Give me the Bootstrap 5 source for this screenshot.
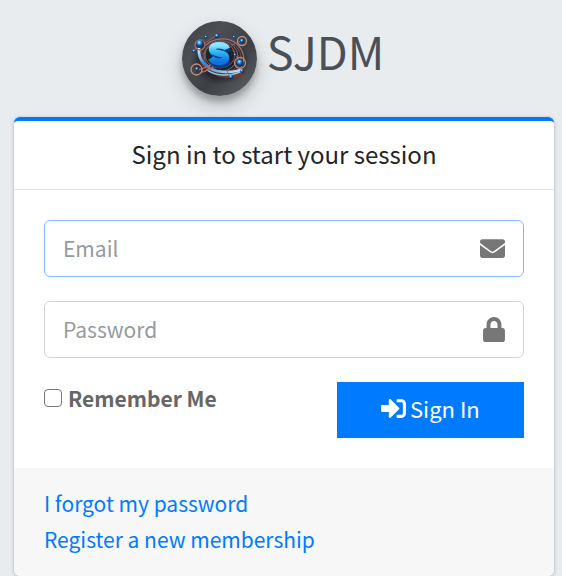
<!DOCTYPE html>
<html lang="en">
<head>
<meta charset="utf-8">
<meta name="viewport" content="width=device-width, initial-scale=1">
<title>SJDM | Sign in</title>
<link href="https://cdn.jsdelivr.net/npm/bootstrap@5.3.0/dist/css/bootstrap.min.css" rel="stylesheet">
<style>
body{background:#e9ecef;color:#212529;font-family:"Noto Sans CJK SC","Noto Sans",sans-serif;font-size:21px;line-height:36px}
.login-box{width:100%;max-width:568px;padding:21px 8px 0 14px}
.brand{color:#495057;font-size:45px;line-height:60px;gap:10px;margin-bottom:21px;padding-right:2px}
.brand:hover{color:#495057}
.brand svg{width:75px;height:75px;border-radius:50%;box-shadow:0 10px 20px rgba(0,0,0,.19),0 6px 6px rgba(0,0,0,.23)}
.login-card{border:0;border-top:4px solid #007bff;border-radius:6px;box-shadow:0 0 2px rgba(0,0,0,.13),0 1px 4px rgba(0,0,0,.2)}
.login-card .card-header{background:#fff;border-bottom:1px solid #dfdfdf;padding:15px 30px 17px}
.login-title{font-size:24px;line-height:36px}
.login-card .card-body{padding:30px}
.field{height:57px;border:1px solid #ced4da;border-radius:6px;margin-bottom:24px;padding-right:18px}
.field:focus-within{border-color:#80bdff}
.field .form-control{border:0;background:none;box-shadow:none;font-size:21px;line-height:36px;padding:0 18px 1px;color:#495057}
.field .form-control::placeholder{color:#939ba2}
.field svg{fill:#777}
.actions{--bs-gutter-x:22px}
.remember{gap:6px;color:#666;font-weight:700;line-height:32px}
.remember .form-check-input{width:18px;height:18px;margin:0;border:1px solid #767676;border-radius:4px}
.btn-sign{background:#007bff;border-color:#007bff;border-radius:0;color:#fff;font-size:22px;line-height:36px;padding:7px 12px 11px;gap:4px}
.btn-sign:hover{background:#0069d9;color:#fff}
.login-card .card-footer{background:#f7f7f7;border:0;border-radius:0 0 6px 6px;padding:17px 30px 19px}
.card-footer a{color:#007bff}
</style>
</head>
<body>
<main class="login-box mx-auto">
<a class="brand d-flex justify-content-center align-items-start text-decoration-none" href="#">
<svg viewBox="0 0 75 75" aria-hidden="true">
<defs>
<linearGradient id="bg" x1="0" y1="0" x2="1" y2="1"><stop stop-color="#3b3e43"/><stop offset=".3" stop-color="#4c4f54"/><stop offset=".6" stop-color="#3c3f44"/><stop offset="1" stop-color="#606367"/></linearGradient>
<linearGradient id="sg" x1="0" y1="0" x2="0" y2="1"><stop stop-color="#8ee7ff"/><stop offset=".45" stop-color="#28b4f4"/><stop offset="1" stop-color="#1271df"/></linearGradient>
<linearGradient id="rg" x1="0" y1="0" x2="1" y2="1"><stop stop-color="#c9ecff"/><stop offset=".4" stop-color="#2684dc"/><stop offset=".7" stop-color="#70b7e7"/><stop offset="1" stop-color="#d3e5f3"/></linearGradient>
<radialGradient id="orb" cx=".4" cy=".3"><stop stop-color="#d7f6ff"/><stop offset=".4" stop-color="#319cee"/><stop offset="1" stop-color="#0c3569"/></radialGradient>
<radialGradient id="sh"><stop stop-color="#17191f"/><stop offset=".65" stop-color="#1b1d23" stop-opacity=".75"/><stop offset="1" stop-color="#202227" stop-opacity="0"/></radialGradient>
</defs>
<rect width="75" height="75" fill="url(#bg)"/>
<ellipse cx="38" cy="40" rx="30" ry="24" fill="url(#sh)"/>
<g fill="none" stroke-linecap="round">
<path d="M24 24c9-8 23-8 31-1 8 8 9 18 2 26" stroke="#9a7470" stroke-width="1.300"/>
<ellipse cx="38" cy="34" rx="15" ry="13" stroke="#8b5b58"/>
<ellipse cx="39" cy="35" rx="17" ry="15" stroke="#6b7482"/>
<ellipse cx="40" cy="36" rx="19" ry="16" stroke="#804b46"/>
<path d="M19 31c-2 11 7 20 19 23 9 2 18 1 24-3" stroke="#6e3732" stroke-width="4"/>
<path d="M17 28c-1 11 7 19 18 22 9 2 17 1 24-1" stroke="url(#rg)" stroke-width="2.800"/>
<path d="M25 49c9 6 23 7 35 1" stroke="#8acbf0" stroke-width="1.500"/>
<path d="M14 49c8 0 12-5 17-6M20 51c6-1 8-4 13-6" stroke="#b06457" stroke-width="1.400"/>
<path d="M20 23c8-3 11-7 15-9M50 24l9-4M51 29l6 11M16 25l-4 5M54 44l6 4M45 50l3 6" stroke="#9a625c"/>
<circle cx="18" cy="24" r="5" stroke="#a76d65" stroke-width="1.300"/>
<circle cx="60" cy="20" r="4.500" stroke="#b98c85" stroke-width="1.300"/>
<circle cx="14.500" cy="48.500" r="5.500" stroke="#c78b82" stroke-width="1.300"/>
<circle cx="58" cy="42" r="5.500" stroke="#b98c88" stroke-width="1.300"/>
</g>
<g fill="url(#orb)"><circle cx="18" cy="23" r="4"/><circle cx="35" cy="15" r="2.200"/><circle cx="60" cy="20" r="2.200"/><circle cx="58" cy="42" r="3.500"/><circle cx="15" cy="48" r="2"/><circle cx="49" cy="56" r="2.300"/><circle cx="12" cy="30" r="1.700"/><circle cx="24" cy="16" r="1.500"/><circle cx="52" cy="16" r="1.300"/><circle cx="60" cy="50" r="2"/><circle cx="53" cy="34" r="1.500"/></g>
<path d="M45 29c-2-5-15-5-15 0 0 6 15 3 14 9-1 5-12 5-15 0" fill="none" stroke="#083e87" stroke-width="6.500" transform="translate(1 2)"/>
<path d="M45 28c-2-5-15-5-15 0 0 6 15 3 14 9-1 5-12 5-15 0" fill="none" stroke="url(#sg)" stroke-width="6.500"/>
</svg>
<span>SJDM</span></a>
<div class="card login-card">
<div class="card-header text-center"><h1 class="login-title fw-normal mb-0">Sign in to start your session</h1></div>
<div class="card-body">
<form>
<div class="field d-flex align-items-center">
<input class="form-control" type="email" placeholder="Email" aria-label="Email" autofocus>
<svg class="flex-shrink-0" width="25" height="25" viewBox="0 0 512 512" aria-hidden="true"><path d="M502.300 190.800c3.900-3.100 9.700-.2 9.700 4.700V400c0 26.500-21.500 48-48 48H48c-26.500 0-48-21.500-48-48V195.600c0-5 5.700-7.800 9.700-4.700 22.400 17.400 52.100 39.500 154.100 113.600 21.100 15.400 56.700 47.800 92.200 47.600 35.700.3 72-32.800 92.300-47.600 102-74.100 131.600-96.300 154-113.700zM256 320c23.200.4 56.600-29.200 73.400-41.400 132.700-96.300 142.800-104.700 173.400-128.700 5.800-4.500 9.200-11.500 9.200-18.900v-19c0-26.500-21.500-48-48-48H48c-26.500 0-48 21.500-48 48v19c0 7.400 3.400 14.300 9.200 18.900 30.600 23.900 40.700 32.400 173.400 128.700 16.800 12.200 50.200 41.800 73.400 41.400z"/></svg>
</div>
<div class="field d-flex align-items-center">
<input class="form-control" type="password" placeholder="Password" aria-label="Password">
<svg class="flex-shrink-0" width="22" height="25" viewBox="0 0 448 512" aria-hidden="true"><path d="M400 224h-24v-72C376 68.200 307.800 0 224 0S72 68.200 72 152v72H48c-26.500 0-48 21.500-48 48v192c0 26.500 21.500 48 48 48h352c26.500 0 48-21.500 48-48V272c0-26.500-21.500-48-48-48zm-104 0H152v-72c0-39.700 32.300-72 72-72s72 32.300 72 72v72z"/></svg>
</div>
<div class="row actions">
<div class="col-7"><label class="remember d-flex align-items-center"><input class="form-check-input" type="checkbox">Remember Me</label></div>
<div class="col-5"><button class="btn btn-sign w-100 d-flex justify-content-center align-items-center" type="submit">
<svg width="25" height="25" viewBox="0 0 512 512" fill="currentColor" aria-hidden="true"><path d="M416 448h-84c-6.600 0-12-5.400-12-12v-40c0-6.600 5.400-12 12-12h84c17.700 0 32-14.300 32-32V160c0-17.700-14.300-32-32-32h-84c-6.600 0-12-5.400-12-12V76c0-6.600 5.400-12 12-12h84c53 0 96 43 96 96v192c0 53-43 96-96 96zm-47-209L201 71c-15-15-41-4.500-41 17v96H24c-13.300 0-24 10.700-24 24v96c0 13.300 10.700 24 24 24h136v96c0 21.500 26 32 41 17l168-168c9.300-9.400 9.300-24.600 0-34z"/></svg>
<span>Sign In</span></button></div>
</div>
</form>
</div>
<div class="card-footer d-flex flex-column align-items-start">
<a class="text-decoration-none" href="#">I forgot my password</a>
<a class="text-decoration-none" href="#">Register a new membership</a>
</div>
</div>
</main>
<script src="https://cdn.jsdelivr.net/npm/bootstrap@5.3.0/dist/js/bootstrap.bundle.min.js"></script>
</body>
</html>
